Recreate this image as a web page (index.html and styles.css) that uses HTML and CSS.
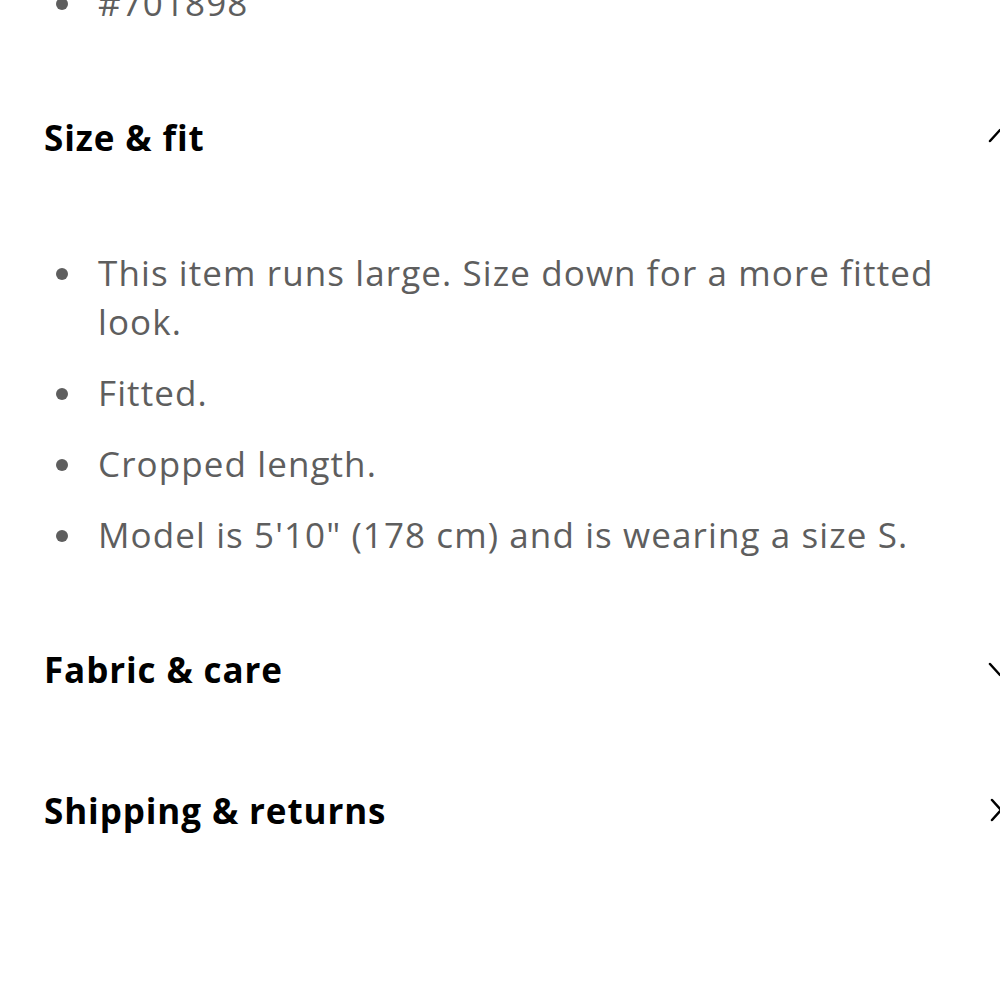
FILE: index.html
```html
<!DOCTYPE html>
<html>
<head>
<meta charset="utf-8">
<link rel="stylesheet" href="styles.css">
</head>
<body>
<div class="page">
  <ul class="list top-list">
    <li>#701898</li>
  </ul>
  <section class="section">
    <div class="head">
      <h2>Size &amp; fit</h2>
      <svg class="chev" viewBox="0 0 24 24"><path d="M2 16 L12 5 L22 16"/></svg>
    </div>
    <ul class="list">
      <li>This item runs large. Size down for a more fitted look.</li>
      <li>Fitted.</li>
      <li>Cropped length.</li>
      <li>Model is 5'10" (178 cm) and is wearing a size S.</li>
    </ul>
  </section>
  <section class="section">
    <div class="head">
      <h2>Fabric &amp; care</h2>
      <svg class="chev" viewBox="0 0 24 24"><path d="M2 7 L12 18 L22 7"/></svg>
    </div>
  </section>
  <section class="section">
    <div class="head">
      <h2>Shipping &amp; returns</h2>
      <svg class="chev" viewBox="0 0 24 24"><path d="M4 2 L13 12 L4 22"/></svg>
    </div>
  </section>
</div>
</body>
</html>
```
FILE: styles.css
```css
html, body {
  margin: 0;
  padding: 0;
  background: #fff;
  overflow: hidden;
}
body {
  font-family: "Open Sans", "Noto Sans", sans-serif;
}
.page {
  width: 968px;
  padding-left: 44px;
}
.list {
  list-style: none;
  margin: 0;
  padding: 0 20px 0 0;
  color: #5e5e5e;
  font-size: 35px;
  letter-spacing: 1.1px;
  line-height: 49px;
}
.list li {
  position: relative;
  padding-left: 54px;
  margin-bottom: 22px;
}
.list li::before {
  content: "";
  position: absolute;
  left: 12px;
  top: 20px;
  width: 12px;
  height: 12px;
  border-radius: 50%;
  background: #5e5e5e;
}
.top-list {
  margin-top: -22px;
}
.head {
  display: flex;
  justify-content: space-between;
  align-items: center;
  height: 60px;
}
.head h2 {
  margin: 0;
  font-size: 35px;
  letter-spacing: 0.9px;
  font-weight: 700;
  color: #000;
}
.chev {
  width: 24px;
  height: 24px;
  fill: none;
  stroke: #000;
  stroke-width: 2.5;
  stroke-linecap: round;
  stroke-linejoin: round;
}
.section .head {
  margin-top: 80px;
  margin-bottom: 81px;
}
```
